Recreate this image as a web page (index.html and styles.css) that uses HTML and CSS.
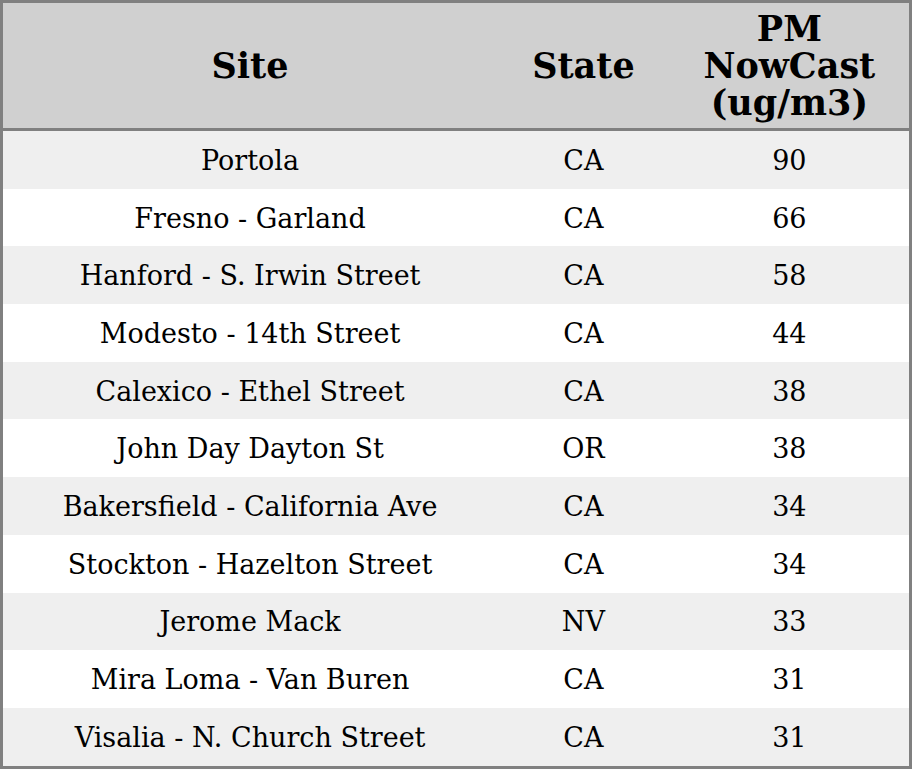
FILE: index.html
```html
<!DOCTYPE html>
<html>
<head>
<meta charset="utf-8">
<link rel="stylesheet" href="styles.css">
</head>
<body>
<table class="aq-table">
  <colgroup>
    <col class="col-site">
    <col class="col-state">
    <col class="col-pm">
  </colgroup>
  <thead>
    <tr><th>Site</th><th>State</th><th>PM NowCast (ug/m3)</th></tr>
  </thead>
  <tbody>
    <tr><td>Portola</td><td>CA</td><td>90</td></tr>
    <tr><td>Fresno - Garland</td><td>CA</td><td>66</td></tr>
    <tr><td>Hanford - S. Irwin Street</td><td>CA</td><td>58</td></tr>
    <tr><td>Modesto - 14th Street</td><td>CA</td><td>44</td></tr>
    <tr><td>Calexico - Ethel Street</td><td>CA</td><td>38</td></tr>
    <tr><td>John Day Dayton St</td><td>OR</td><td>38</td></tr>
    <tr><td>Bakersfield - California Ave</td><td>CA</td><td>34</td></tr>
    <tr><td>Stockton - Hazelton Street</td><td>CA</td><td>34</td></tr>
    <tr><td>Jerome Mack</td><td>NV</td><td>33</td></tr>
    <tr><td>Mira Loma - Van Buren</td><td>CA</td><td>31</td></tr>
    <tr><td>Visalia - N. Church Street</td><td>CA</td><td>31</td></tr>
  </tbody>
</table>
</body>
</html>
```
FILE: styles.css
```css
html, body {
  margin: 0;
  padding: 0;
  background: #ffffff;
}
.aq-table {
  width: 912px;
  border-collapse: collapse;
  border: 3px solid #808080;
  font-family: "DejaVu Serif", serif;
  color: #000;
}
.col-site { width: 494px; }
.col-state { width: 172px; }
.col-pm { width: 240px; }
.aq-table th {
  background: #d0d0d0;
  font-size: 35px;
  font-weight: bold;
  text-align: center;
  padding: 7px 30px 7px;
  border-bottom: 3px solid #808080;
  line-height: 37px;
}
.aq-table td {
  font-size: 27px;
  text-align: center;
  padding: 2px 0 0;
  height: 55.7px;
  line-height: 30px;
}
.aq-table tbody tr:nth-child(odd) td {
  background: #efefef;
}
```
